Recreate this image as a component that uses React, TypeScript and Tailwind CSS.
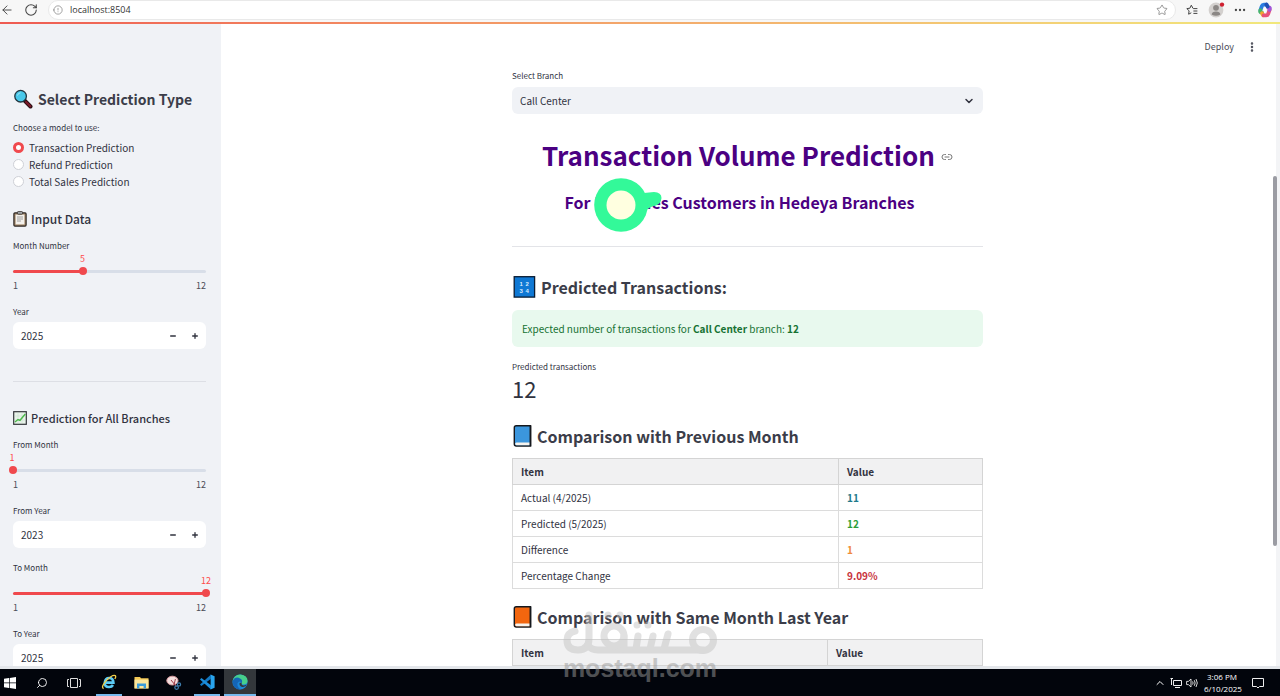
import { useState } from "react";
import type { ReactNode } from "react";
import {
  ArrowLeft,
  ChevronDown,
  ChevronUp,
  Info,
  Link2,
  Minus,
  MoreHorizontal,
  MoreVertical,
  Plus,
  RotateCw,
  Search,
  Star,
} from "lucide-react";

const models = [
  "Transaction Prediction",
  "Refund Prediction",
  "Total Sales Prediction",
];

const previousMonth = [
  { item: "Actual (4/2025)", value: "11", color: "text-[#1f7a8c]" },
  { item: "Predicted (5/2025)", value: "12", color: "text-[#2e9e3a]" },
  { item: "Difference", value: "1", color: "text-[#f08a3c]" },
  { item: "Percentage Change", value: "9.09%", color: "text-[#c8323c]" },
];

function SliderField({ id, label, initial }: { id: string; label: string; initial: number }) {
  const [value, setValue] = useState(initial);
  const percent = ((value - 1) / 11) * 100;

  return (
    <div>
      <label htmlFor={id} className="block text-[8px] leading-3 text-[#31333f]">
        {label}
      </label>
      <div className="relative -ml-px h-3.5 text-[9px] leading-3.5 text-[#ff4b4b]">
        <span className="absolute top-0 -translate-x-1/2" style={{ left: `${percent}%` }}>
          {value}
        </span>
      </div>
      <div className="relative flex h-2.5 items-center">
        <div className="h-[3px] w-full rounded-full bg-[#d8dee8]">
          <div className="h-full rounded-full bg-[#f0494d]" style={{ width: `${percent}%` }} />
        </div>
        <input
          id={id}
          type="range"
          min={1}
          max={12}
          value={value}
          onChange={(e) => setValue(Number(e.target.value))}
          className="absolute -inset-x-1 top-0 h-2.5 w-[calc(100%+8px)] cursor-pointer appearance-none bg-transparent [&::-webkit-slider-thumb]:size-2 [&::-webkit-slider-thumb]:appearance-none [&::-webkit-slider-thumb]:rounded-full [&::-webkit-slider-thumb]:bg-[#f0494d]"
        />
      </div>
      <div className="mt-1 flex justify-between text-[9px] leading-3 text-[#4a4c57]">
        <span>1</span>
        <span>12</span>
      </div>
    </div>
  );
}

function NumberField({ id, label, initial }: { id: string; label: string; initial: number }) {
  const [value, setValue] = useState(initial);

  return (
    <div>
      <label htmlFor={id} className="block text-[8px] leading-3 text-[#31333f]">
        {label}
      </label>
      <div className="mt-1 flex h-[27px] items-center rounded-md bg-white text-[#31333f]">
        <input
          id={id}
          type="text"
          inputMode="numeric"
          value={value}
          onChange={(e) => setValue(Number(e.target.value) || 0)}
          className="min-w-0 flex-1 bg-transparent pl-2 text-[10px] outline-none"
        />
        <button
          type="button"
          aria-label={`Decrease ${label}`}
          onClick={() => setValue(value - 1)}
          className="flex h-full w-[22px] items-center justify-center"
        >
          <Minus className="size-2" strokeWidth={4} />
        </button>
        <button
          type="button"
          aria-label={`Increase ${label}`}
          onClick={() => setValue(value + 1)}
          className="flex h-full w-[22px] items-center justify-center"
        >
          <Plus className="size-2" strokeWidth={4} />
        </button>
      </div>
    </div>
  );
}

function SectionHeading({ icon, children }: { icon: ReactNode; children: ReactNode }) {
  return (
    <h3 className="flex items-center gap-1 text-[16px] leading-7 font-bold text-[#3b3d49]">
      {icon}
      {children}
    </h3>
  );
}

function MagnifierIcon() {
  return (
    <svg viewBox="0 0 20 20" className="size-5">
      <path d="M11.5 11.5 17.5 17.5" stroke="#2b0d12" strokeWidth="4" strokeLinecap="round" />
      <path d="M13 13 17.3 17.3" stroke="#7d1a2a" strokeWidth="2" strokeLinecap="round" />
      <circle cx="7.6" cy="7.2" r="5.8" fill="#48c8ea" stroke="#20353f" strokeWidth="1.3" />
      <path d="M4.5 6.5a3.4 3.4 0 0 1 3-2.7" fill="none" stroke="#9fe6f7" strokeWidth="1" />
    </svg>
  );
}

function ClipboardIcon() {
  return (
    <svg viewBox="0 0 14 16" className="h-4 w-3.5">
      <rect x="0.9" y="1.9" width="12.2" height="13.2" rx="1" fill="#a58a6c" stroke="#2c2622" strokeWidth="1.2" />
      <rect x="2.6" y="3.6" width="8.8" height="9.8" fill="#f4f1ec" />
      <rect x="4.4" y="0.6" width="5.2" height="2.6" rx="0.8" fill="#a9adb0" stroke="#2c2622" strokeWidth="0.8" />
      <path d="M4 6h6M4 8h6M4 10h4" stroke="#8e8e8e" strokeWidth="0.8" />
    </svg>
  );
}

function ChartIcon() {
  return (
    <svg viewBox="0 0 14 14" className="size-3.5">
      <rect x="0.7" y="0.7" width="12.6" height="12.6" fill="#e9f3ea" stroke="#33373a" strokeWidth="1.2" />
      <path d="M1.5 5h11M1.5 9h11M5 1.5v11M9 1.5v11" stroke="#c5dcc8" strokeWidth="0.5" />
      <path d="M2 11 5 8.5 7 9.3 12.3 3" fill="none" stroke="#4cb84c" strokeWidth="1.4" />
    </svg>
  );
}

function NumbersIcon() {
  return (
    <svg viewBox="0 0 25 24" className="h-6 w-[25px]">
      <rect x="2.2" y="1.7" width="20.4" height="20.4" fill="#0f78d4" stroke="#0a1c33" strokeWidth="1.3" />
      <g fill="#d9ecff" fontSize="6" fontWeight="700" fontFamily="Liberation Sans, sans-serif">
        <text x="7.6" y="10.8">1</text>
        <text x="13.6" y="10.8">2</text>
        <text x="7.6" y="18.4">3</text>
        <text x="13.6" y="18.4">4</text>
      </g>
    </svg>
  );
}

function BookIcon({ className }: { className: string }) {
  return (
    <svg viewBox="0 0 21 24" className={`h-6 w-[21px] ${className}`}>
      <path d="M4.2 1.8H18.6V22H4.2Q2.3 22 2.3 20V3.7Q2.3 1.8 4.2 1.8Z" fill="currentColor" stroke="#15181d" strokeWidth="1.4" />
      <path d="M4.4 18.4H17.8V21.2H4.4Q3.2 21 3.2 19.8T4.4 18.4Z" fill="#f6f3ee" />
      <path d="M18.4 2V22" stroke="#15181d" strokeWidth="1.6" />
    </svg>
  );
}

function CopilotIcon() {
  return (
    <svg viewBox="0 0 16 16" className="size-4" fill="none" strokeWidth="3.8" strokeLinejoin="round">
      <path d="M9.6 2.6H6.8Q5.4 2.6 4.9 4L3.4 8.2" stroke="#2a7de0" strokeLinecap="round" />
      <path d="M3.4 8.2Q2.4 10.6 4.6 10.6H5.2" stroke="#46b36b" strokeLinecap="round" />
      <path d="M5 11.2 6 13.2" stroke="#f5a531" strokeLinecap="round" />
      <path d="M6.6 13.4H9.2Q10.6 13.4 11.1 12L12.6 7.8" stroke="#e8527a" strokeLinecap="round" />
      <path d="M12.4 7.8Q13.6 5.4 11.8 5.4H11" stroke="#a257d9" strokeLinecap="round" />
      <path d="M9.4 2.6 10.6 4.6" stroke="#1f4fb5" strokeLinecap="round" />
      <path d="M8.4 6.6 7.6 9.4" stroke="#fff" strokeWidth="1.8" strokeLinecap="round" />
    </svg>
  );
}

function BrowserBar() {
  return (
    <header className="flex h-[22px] shrink-0 items-center bg-[#f7f7f7] pb-[3px] text-[#444]">
      <button type="button" aria-label="Back">
        <ArrowLeft className="size-3.5" strokeWidth={1.6} />
      </button>
      <button type="button" aria-label="Reload" className="ml-2.5">
        <RotateCw className="size-3.5" strokeWidth={1.8} />
      </button>
      <div className="ml-2.5 flex h-5 flex-1 items-center rounded-full border border-[#e9e9e9] bg-white pr-[7px] pl-1">
        <Info className="size-2.5 rotate-180 text-[#777]" strokeWidth={1.6} />
        <input
          type="text"
          aria-label="Address"
          defaultValue="localhost:8504"
          className="ml-[7px] min-w-0 flex-1 bg-transparent font-['Open_Sans',sans-serif] text-[9px] text-[#333] outline-none"
        />
        <Star className="size-3 text-[#777]" strokeWidth={1.5} />
      </div>
      <button type="button" aria-label="Favorites" className="ml-2.5">
        <svg viewBox="0 0 12 12" className="size-3" fill="none" stroke="#444" strokeWidth="1">
          <path d="M7 4.4 5.3 1.2 3.9 4.2.8 4.6 3.1 6.8 2.6 10.2 5.3 8.8M7.2 4.6H11.4M7.4 7H11.4M7.4 9.4H11.4" strokeLinejoin="round" />
        </svg>
      </button>
      <button type="button" aria-label="Profile" className="ml-2.5">
        <svg viewBox="0 0 17 17" className="size-[17px]">
          <circle cx="8" cy="9" r="7.4" fill="#d3d0ce" />
          <circle cx="8" cy="6.8" r="2.9" fill="#8b8785" />
          <path d="M3.6 13.4Q4 10.4 8 10.4T12.4 13.4Q8 16 3.6 13.4Z" fill="#8b8785" />
          <circle cx="14" cy="3.6" r="2.2" fill="#cf2030" />
        </svg>
      </button>
      <button type="button" aria-label="Settings and more" className="ml-2">
        <MoreHorizontal className="size-3.5" />
      </button>
      <button type="button" aria-label="Copilot" className="mr-[7px] ml-2.5">
        <CopilotIcon />
      </button>
    </header>
  );
}

function Sidebar() {
  const [model, setModel] = useState(models[0]);

  return (
    <aside className="w-[221px] shrink-0 overflow-hidden bg-[#f0f2f6] pt-[65px] pr-[15px] pl-[13px]">
      <h2 className="flex items-center gap-[5px] text-[14px] leading-5 font-bold text-[#3b3d49]">
        <MagnifierIcon />
        Select Prediction Type
      </h2>
      <fieldset className="mt-[13px]">
        <legend className="mb-[5px] text-[8px] leading-3 text-[#31333f]">
          Choose a model to use:
        </legend>
        {models.map((name) => (
          <label key={name} className="flex h-[17px] items-center gap-[5px] text-[10px] text-[#31333f]">
            <input
              type="radio"
              name="model"
              checked={model === name}
              onChange={() => setModel(name)}
              className="size-[11px] appearance-none rounded-full border border-[#ced0d6] bg-white checked:border-3 checked:border-[#f0494d]"
            />
            {name}
          </label>
        ))}
      </fieldset>

      <h3 className="mt-[19px] mb-[11px] flex items-center gap-1 text-[12px] leading-5 font-medium text-[#31333f]">
        <ClipboardIcon />
        Input Data
      </h3>
      <div className="flex flex-col gap-3.5">
        <SliderField id="month" label="Month Number" initial={5} />
        <NumberField id="year" label="Year" initial={2025} />
      </div>

      <hr className="mt-8 mb-[26px] border-[#dddfe5]" />

      <h3 className="mb-[11px] flex items-center gap-1 text-[11px] leading-5 font-medium text-[#31333f]">
        <ChartIcon />
        Prediction for All Branches
      </h3>
      <div className="flex flex-col gap-3.5">
        <SliderField id="from-month" label="From Month" initial={1} />
        <NumberField id="from-year" label="From Year" initial={2023} />
        <SliderField id="to-month" label="To Month" initial={12} />
        <NumberField id="to-year" label="To Year" initial={2025} />
      </div>
    </aside>
  );
}

// highlighted cursor resting on the page subtitle
function PointerMark() {
  return (
    <svg viewBox="0 0 68 54" className="absolute -top-3 left-[82px] h-[54px] w-[68px]">
      <path d="M40 10Q46 15 50 15L60 14Q67.5 14.5 67.5 20 67 25.5 62 27.5 55 28.5 52 33L40 40Z" fill="#33f999" />
      <circle cx="27" cy="27" r="26.8" fill="#33f999" />
      <circle cx="27" cy="27" r="14.5" fill="#ffffe0" />
    </svg>
  );
}

function Watermark() {
  return (
    <div className="pointer-events-none absolute bottom-4 left-[562px] w-[156px] text-center opacity-50">
      <svg viewBox="0 0 156 46" className="h-[46px] w-full" fill="none" stroke="#c4c4c4" strokeWidth="7" strokeLinecap="round">
        <path d="M27 7V30Q27 42 16 42 5 42 5 32 5 25 13 23" />
        <path d="M26 37Q29 42 36 42H141" />
        <circle cx="141" cy="32" r="10.5" />
        <circle cx="52" cy="28" r="10" />
        <path d="M62 28V41M76 28 74 41M91 28 88 41M106 26 102 41" />
        <path d="M46 7V7.1M58 7V7.1M75 17V17.1M86 17V17.1" />
      </svg>
      <p className="mt-0.5 font-['Liberation_Sans',sans-serif] text-[25px] leading-6 font-bold text-[#9a9a9a]">
        mostaql.com
      </p>
    </div>
  );
}

function Results() {
  return (
    <main className="min-w-0 flex-1 overflow-hidden bg-white pr-0.5">
      <div className="mx-auto w-full max-w-[471px] pt-[46px]">
        <label htmlFor="branch" className="block text-[8px] leading-3 text-[#31333f]">
          Select Branch
        </label>
        <div className="relative mt-[5px]">
          <select
            id="branch"
            className="block h-[27px] w-full appearance-none rounded-md bg-[#f0f2f6] px-2 text-[10px] text-[#31333f]"
          >
            <option>Call Center</option>
          </select>
          <ChevronDown className="absolute top-2 right-2 size-3 text-[#31333f]" strokeWidth={3} />
        </div>

        <h1 className="mt-[23px] flex items-center justify-center gap-1.5 text-[26px] leading-9 font-bold whitespace-nowrap text-[#4b0082]">
          Transaction Volume Prediction
          <a href="#transactions" aria-label="Link to heading" className="pt-1">
            <Link2 className="size-3 text-[#777]" />
          </a>
        </h1>
        <div className="relative mt-[17px] pr-4">
          <h3 className="text-center text-[16px] leading-6 font-bold whitespace-nowrap text-[#4b0082]">
            For Enquiries Customers in Hedeya Branches
          </h3>
          <PointerMark />
        </div>
        <hr className="mt-8 border-[#e3e4e8]" />

        <div id="transactions" className="mt-[26px]">
          <SectionHeading icon={<NumbersIcon />}>Predicted Transactions:</SectionHeading>
        </div>
        <p className="mt-[9px] rounded-md bg-[#e8f9ee] px-2.5 text-[10px] leading-[37px] text-[#177233]">
          Expected number of transactions for <strong>Call Center</strong> branch: <strong>12</strong>
        </p>
        <p className="mt-3.5 text-[8px] leading-3 text-[#31333f]">Predicted transactions</p>
        <p className="mt-px text-[22px] leading-7 text-[#31333f]">12</p>

        <div className="mt-5">
          <SectionHeading icon={<BookIcon className="text-[#3b96dd]" />}>
            Comparison with Previous Month
          </SectionHeading>
        </div>
        <table className="mt-2 w-full table-fixed border-collapse text-[10px] text-[#31333f] [&_td]:border [&_td]:border-[#dcdcdc] [&_td]:px-2 [&_th]:border [&_th]:border-[#d4d4d4] [&_th]:px-2">
          <thead>
            <tr className="h-[26px] bg-[#f1f1f2] text-left">
              <th className="w-[326px]">Item</th>
              <th>Value</th>
            </tr>
          </thead>
          <tbody>
            {previousMonth.map((row) => (
              <tr key={row.item} className="h-[26px]">
                <td>{row.item}</td>
                <td className={`font-bold ${row.color}`}>{row.value}</td>
              </tr>
            ))}
          </tbody>
        </table>

        <div className="mt-3.5">
          <SectionHeading icon={<BookIcon className="text-[#f2660f]" />}>
            Comparison with Same Month Last Year
          </SectionHeading>
        </div>
        <table className="mt-2 w-full table-fixed border-collapse text-[10px] text-[#31333f] [&_th]:border [&_th]:border-[#d4d4d4] [&_th]:px-2">
          <thead>
            <tr className="h-[26px] bg-[#f1f1f2] text-left">
              <th className="w-[315px]">Item</th>
              <th>Value</th>
            </tr>
          </thead>
        </table>
      </div>
    </main>
  );
}

function Taskbar() {
  return (
    <footer className="flex h-[27px] shrink-0 items-stretch bg-[#02050c] font-['Open_Sans',sans-serif] text-white">
      <button type="button" aria-label="Start" className="flex w-5 items-center justify-center">
        <svg viewBox="0 0 12 12" className="size-3" fill="#fff">
          <path d="M0 1.8 5 1.1V5.6H0ZM5.7 1 12 .1V5.6H5.7ZM0 6.3H5V10.9L0 10.2ZM5.7 6.3H12V11.9L5.7 11Z" />
        </svg>
      </button>
      <button type="button" aria-label="Search" className="flex w-11 items-center justify-center">
        <Search className="size-3 -scale-x-100" strokeWidth={1.8} />
      </button>
      <button type="button" aria-label="Task view" className="flex w-5 items-center justify-center">
        <svg viewBox="0 0 14 12" className="h-3 w-3.5" fill="none" stroke="#ddd">
          <path d="M3.5 1.5H10.5V10.5H3.5ZM2 2.5H.5V9.5H2M12 2.5H13.5V9.5H12" />
        </svg>
      </button>
      <button type="button" aria-label="Internet Explorer" className="ml-3 flex w-[26px] items-center justify-center border-b-2 border-[#76b9ed]">
        <svg viewBox="0 0 16 16" className="size-4" fill="none">
          <path d="M4 8.6H12.4Q12.2 4 8.2 4T3.8 8.6 8.2 13Q10.8 13 12 11" stroke="#5ccbf5" strokeWidth="2.6" />
          <path d="M2.6 14.6Q-.4 13.4 5 6.8 11.4.4 14.2 1.6 15.4 2.6 13.8 5" stroke="#f2cf4a" strokeWidth="1.3" />
        </svg>
      </button>
      <button type="button" aria-label="File Explorer" className="ml-1.5 flex w-[26px] items-center justify-center">
        <svg viewBox="0 0 15 13" className="h-[13px] w-[15px]">
          <path d="M.5 1H6L7 2.2H14.5V12.4H.5Z" fill="#f4c955" />
          <path d="M.5 3.6H14.5V12.4H.5Z" fill="#fbe69c" />
          <path d="M3 7.4H12V12.6H9.6V10H5.4V12.6H3Z" fill="#3a9bd9" />
        </svg>
      </button>
      <button type="button" aria-label="Snipping Tool" className="ml-[7px] flex w-[26px] items-center justify-center">
        <svg viewBox="0 0 16 16" className="size-4">
          <ellipse cx="6.4" cy="5.6" rx="5.6" ry="4.4" fill="#f3dede" stroke="#d99a9f" />
          <path d="M5 5 10.4 11.6M9.4 4 8 10" stroke="#a33b47" strokeWidth="1" />
          <circle cx="10.6" cy="12.6" r="1.8" fill="none" stroke="#3f7fb0" strokeWidth="1.2" />
          <circle cx="13" cy="9.4" r="1.6" fill="none" stroke="#3f7fb0" strokeWidth="1.2" />
        </svg>
      </button>
      <button type="button" aria-label="Visual Studio Code" className="ml-[7px] flex w-[26px] items-center justify-center border-b-2 border-[#76b9ed]">
        <svg viewBox="0 0 16 16" className="size-4">
          <path d="M11.6.4 15.6 2.2V13.8L11.6 15.6Z" fill="#29a4ee" />
          <path d="M12 .6 1 10.6 2.4 12 12 4.8Z" fill="#1277c0" />
          <path d="M12 15.4 1 5.4 2.4 4 12 11.2Z" fill="#1b8ddb" />
        </svg>
      </button>
      <button type="button" aria-label="Edge" className="ml-1 flex w-8 items-center justify-center border-b-2 border-[#76b9ed] bg-[#33373b]">
        <svg viewBox="0 0 16 16" className="size-4">
          <circle cx="8" cy="8" r="7.6" fill="#1c86d6" />
          <path d="M.6 7Q2 .4 8.4.4 15.6 1 15.6 7 15.2 10.6 11 10.6 9 10.4 9.8 8.6 10.4 5.4 7 5 3 4.8.6 7Z" fill="#47cf8b" />
          <path d="M.6 7Q3.4 2 8 4.4 11 6 9.8 8.6 7 6 5.4 9.4 5 13.4 9 15.4 1 16 .6 7Z" fill="#1565b5" />
          <path d="M9.8 8.6Q8.6 11.4 12 11.4L15 10.6Q13.4 13.4 10.4 13 7 12 7.6 9Z" fill="#33373b" />
        </svg>
      </button>
      <div className="mr-4 ml-auto flex items-center">
        <ChevronUp className="size-3" strokeWidth={2} />
        <svg viewBox="0 0 12 12" className="ml-1 size-3" fill="none" stroke="#eee">
          <path d="M3.5 3.5H11.5V8.5H3.5ZM5 10.5H10M1.5 1V8M.5 1.5H3" />
        </svg>
        <svg viewBox="0 0 12 12" className="ml-1 size-3" fill="none" stroke="#eee" strokeWidth="0.9">
          <path d="M.6 4.4H2.4L5 2V10L2.4 7.6H.6ZM6.6 4.4Q7.6 6 6.6 7.6M8.3 3.2Q10 6 8.3 8.8M10 2Q12.6 6 10 10" />
        </svg>
        <div className="mr-px ml-1.5 w-9 text-center text-[8px] leading-3 whitespace-nowrap">
          <p>3:06 PM</p>
          <p>6/10/2025</p>
        </div>
        <svg viewBox="0 0 12 12" className="ml-[11px] size-3" fill="none" stroke="#eee">
          <path d="M.5 1.5H11.5V9.5H7.5L6 11 4.5 9.5H.5Z" />
        </svg>
      </div>
    </footer>
  );
}

export default function App() {
  return (
    <div className="relative flex h-screen flex-col overflow-hidden bg-[#f3f4f6] font-['Noto_Sans_CJK_SC',sans-serif]">
      <BrowserBar />
      <div className="h-0.5 shrink-0 bg-linear-to-r from-[#ee5a52] via-[#f3a86b] to-[#f1e87c]" />
      <div className="relative mr-1 flex min-h-0 flex-1">
        <Sidebar />
        <Results />
        <div className="absolute top-4 right-[18px] flex items-center gap-3 text-[#4a4c57]">
          <button type="button" className="text-[9px] leading-3.5">
            Deploy
          </button>
          <button type="button" aria-label="Main menu">
            <MoreVertical className="size-3" strokeWidth={3} />
          </button>
        </div>
        <div className="absolute top-[152px] -right-px h-[370px] w-1 rounded-full bg-[#9b9ca3]" />
      </div>
      <div className="h-[3px] shrink-0 bg-[#e3e6ea]" />
      <Taskbar />
      <Watermark />
    </div>
  );
}
